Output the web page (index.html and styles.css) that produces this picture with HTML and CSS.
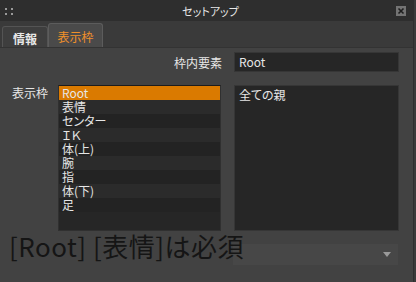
FILE: index.html
```html
<!DOCTYPE html>
<html lang="ja">

<head>
    <meta charset="UTF-8">
    <title>セットアップ</title>
    <link rel="stylesheet" href="styles.css">
</head>

<body>
    <div class="window">
        <div class="titlebar">
            <div class="grip">
                <span></span><span></span><span></span><span></span>
            </div>
            <div class="title">セットアップ</div>
            <div class="close">
                <svg width="10" height="10" viewBox="0 0 10 10">
                    <path d="M2.5 2.5 L7.5 7.5 M7.5 2.5 L2.5 7.5" stroke="#1e1e1e" stroke-width="1.6" />
                </svg>
            </div>
        </div>

        <div class="tabs">
            <div class="tab">情報</div>
            <div class="tab active">表示枠</div>
        </div>

        <div class="content">
            <div class="row-top">
                <div class="field-label">枠内要素</div>
                <div class="input">Root</div>
            </div>

            <div class="row-main">
                <div class="side-label">表示枠</div>
                <div class="list">
                    <div class="item selected">Root</div>
                    <div class="item">表情</div>
                    <div class="item">センター</div>
                    <div class="item">ＩＫ</div>
                    <div class="item">体(上)</div>
                    <div class="item">腕</div>
                    <div class="item">指</div>
                    <div class="item">体(下)</div>
                    <div class="item">足</div>
                </div>
                <div class="detail">全ての親</div>
            </div>

            <div class="row-bottom">
                <div class="combo">
                    <svg width="8" height="5" viewBox="0 0 8 5">
                        <path d="M0 0 H8 L4 5 Z" fill="#9a9a9a" />
                    </svg>
                </div>
            </div>

            <div class="notice">[Root] [表情]は必須</div>
        </div>
    </div>
</body>

</html>
```

FILE: styles.css
```css
* {
    margin: 0;
    padding: 0;
    box-sizing: border-box;
}

body {
    width: 416px;
    height: 282px;
    background-color: #3a3a3a;
    font-family: 'Noto Sans CJK JP', sans-serif;
    font-size: 12px;
    font-feature-settings: "palt";
    color: #e6e6e6;
    overflow: hidden;
}

.window {
    width: 414px;
    height: 282px;
    background-color: #424242;
    border-right: 1px solid #2e2e2e;
}

.titlebar {
    height: 21px;
    background-color: #2e2e2e;
    display: flex;
    align-items: center;
    justify-content: space-between;
    padding: 0 7px 0 5px;
}

.grip {
    display: grid;
    grid-template-columns: 2px 2px;
    gap: 3px 4px;
    margin-top: 2px;
}

.grip span {
    width: 2px;
    height: 2px;
    background: #9a9a9a;
}

.title {
    color: #e8e8e8;
    font-size: 11px;
    margin-left: 12px;
}

.close {
    width: 10px;
    height: 10px;
    background-color: #747474;
    display: flex;
}

.tabs {
    height: 27px;
    background-color: #3a3a3a;
    display: flex;
    align-items: flex-end;
    padding-left: 2px;
    border-bottom: 1px solid #333;
}

.tab {
    height: 21px;
    width: 46px;
    background-color: #3e3e3e;
    border: 1px solid #545454;
    border-bottom: none;
    border-radius: 3px 3px 0 0;
    font-size: 12px;
    font-weight: bold;
    color: #e8e8e8;
    display: flex;
    align-items: center;
    justify-content: center;
    padding-top: 2px;
}

.tab.active {
    height: 24px;
    width: 55px;
    background-color: #4a4a4a;
    border-color: #5c5c5c;
    font-weight: normal;
    color: #f0902a;
}

.content {
    position: relative;
    padding: 4px 0 0 12px;
}

.row-top {
    display: flex;
    align-items: center;
    height: 20px;
}

.field-label {
    width: 210px;
    text-align: right;
}

.input {
    margin-left: 12px;
    width: 165px;
    height: 20px;
    background-color: #262626;
    border: 1px solid #363636;
    padding: 0 4px;
    line-height: 18px;
}

.row-main {
    display: flex;
    margin-top: 13px;
}

.side-label {
    width: 46px;
    line-height: 16px;
}

.list {
    width: 163px;
    height: 146px;
    background-color: #262626;
    border: 1px solid #303030;
    border-top-color: #1c1c1c;
}

.item {
    height: 14px;
    line-height: 14px;
    padding-left: 3px;
    background-color: #232323;
}

.item:nth-child(even) {
    background-color: #2b2b2b;
}

.item.selected {
    background-color: #da7a00;
}

.detail {
    margin-left: 13px;
    width: 165px;
    height: 146px;
    background-color: #262626;
    border: 1px solid #363636;
    padding: 1px 4px;
    line-height: 16px;
}

.row-bottom {
    display: flex;
    justify-content: flex-end;
    padding-right: 15px;
    margin-top: 13px;
}

.combo {
    width: 165px;
    height: 21px;
    background-color: #474747;
    display: flex;
    align-items: center;
    justify-content: flex-end;
    padding-right: 7px;
}

.notice {
    position: absolute;
    left: 9px;
    top: 179px;
    font-size: 26px;
    font-feature-settings: normal;
    color: #151515;
    white-space: nowrap;
    letter-spacing: 0.5px;
}
```
